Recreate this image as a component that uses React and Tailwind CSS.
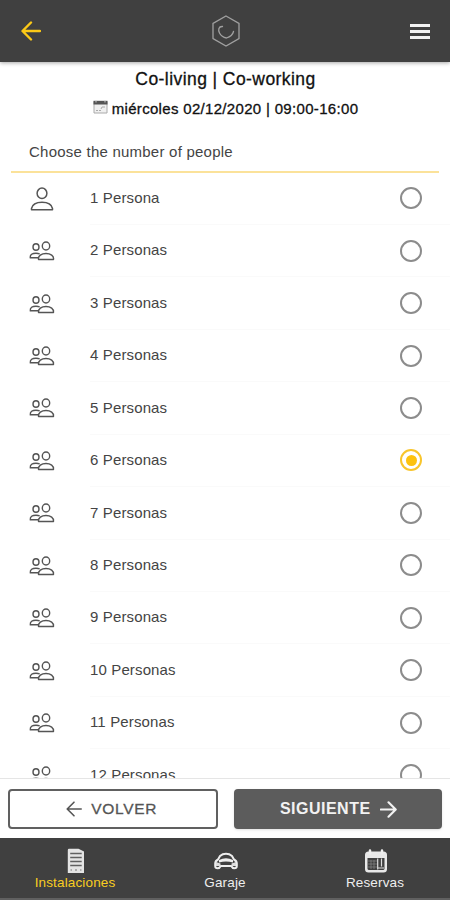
import { useState } from 'react';
import clsx from 'clsx';

const people = Array.from({ length: 12 }, (_, i) => i + 1);

const ArrowIcon = ({ className }) => (
  <svg className={className} viewBox="0 0 20 20" fill="none" stroke="currentColor" strokeLinecap="round" strokeLinejoin="round">
    <path d="M10 1.500 1.500 10l8.500 8.500M2 10h17" />
  </svg>
);

const LogoIcon = () => (
  <svg className="h-8 w-7" viewBox="0 0 28 32" fill="none" stroke="#a0a0a0" strokeWidth="1.300">
    <path d="M14 1 27 8.500v15L14 31 1 23.500v-15Z" />
    <path d="M10.500 11.500c-4-.3-4.500 3.500-3 6.500 1.500 3 4 4.500 7 5 3.500-1 6.300-3.500 7-6.500" strokeLinecap="round" />
  </svg>
);

const PersonIcon = () => (
  <svg className="h-6 w-6" viewBox="0 0 24 24" fill="none" stroke="#555" strokeWidth="1.500">
    <ellipse cx="12" cy="6.300" rx="4.900" ry="5.200" />
    <path d="M1.500 22.700v-1.200c.8-3.800 4.700-6.200 10.500-6.200s9.700 2.400 10.500 6.200v1.200Z" strokeLinejoin="round" />
  </svg>
);

const PeopleIcon = () => (
  <svg className="h-5 w-[26px]" viewBox="0 0 26 20" fill="none" stroke="#555" strokeWidth="1.400">
    <ellipse cx="17" cy="5" rx="3.700" ry="4" />
    <path d="M9.500 18.500c-.6-3.800 3-6 7.500-6s8.100 2.200 7.500 6Z" strokeLinejoin="round" />
    <ellipse cx="7" cy="6" rx="3" ry="3.200" />
    <path d="M9.500 16.800H1.300c-.4-3.200 2-4.600 5.700-4.600 1.500 0 2.700.2 3.700.8" strokeLinejoin="round" />
  </svg>
);

const SmallCalendarIcon = () => (
  <svg className="-mt-1 h-[14px] w-[15px]" viewBox="0 0 15 14" fill="none">
    <path d="M1 1.500h13v11.500H1Z" fill="#f0f0f0" stroke="#aaa" />
    <path d="M.5.800h14v3.700H.5Z" fill="#555" />
    <path d="M3 .5v2M12 .5v2" stroke="#ccc" />
    <path d="M3 10.500h2M6 10.500h2M9 7h3M8 9l1-2" stroke="#aaa" />
  </svg>
);

const BuildingIcon = () => (
  <svg className="ml-[2px] h-[26px] w-[18px]" viewBox="0 0 18 26" fill="none">
    <path d="M.8 2Q.8.800 2 .800h9.500L17 3.500V25H.8Z" fill="#e4e4e4" />
    <path d="M3.200 5.500h11.500M3.200 9.500h11.500M3.200 13.500h11.500M3.200 17.500h11.500" stroke="#606060" strokeWidth="1.500" />
    <path d="M3.500 22h1.500M8 22h2M13 22h1.500" stroke="#777" />
  </svg>
);

const CarIcon = () => (
  <svg className="ml-[2px] h-[18px] w-6" viewBox="0 0 24 18" fill="none">
    <path d="M4 7.500 6 4Q8.500 1.800 12 1.800T18 4l2 3.500q2.800 1.500 2.800 4v2.500q0 2.200-2.500 2.200-2 0-3-2.200H6.700q-1 2.200-3 2.200-2.500 0-2.500-2.200v-2.500q0-2.500 2.800-4Z" fill="#404040" stroke="#eee" strokeWidth="2" strokeLinejoin="round" />
    <path d="M5 8Q12 4.700 19 8v2.500Q12 8.300 5 10.500Z" fill="#eee" />
    <path d="m2 10 4.500 1.500v2.500H2ZM22 10l-4.500 1.500v2.500H22Z" fill="#ddd" />
  </svg>
);

const ReservasIcon = () => (
  <svg className="ml-[2px] h-6 w-6" viewBox="0 0 24 24" fill="none">
    <rect x="1" y="2.500" width="22" height="21" rx="3.500" fill="#e8e8e8" />
    <path d="M6 1.500v3M18 1.500v3" stroke="#eee" strokeWidth="2.500" strokeLinecap="round" />
    <path d="M3.500 9h17v10.500q0 1.500-1.500 1.500H5q-1.500 0-1.500-1.500Z" fill="#404040" />
    <path d="M4 12h9.500M4 15h9.500M4 18h9.500M7 11v9M10 11v9" stroke="#888" strokeWidth=".7" />
    <path d="M13.700 9.500v11M17.500 9.500v8M14 19h6" stroke="#ddd" strokeWidth="1.200" />
  </svg>
);

const Radio = ({ checked, onChange, label }) => (
  <button
    type="button"
    role="radio"
    aria-checked={checked}
    aria-label={label}
    onClick={onChange}
    className={clsx(
      'flex h-[22px] w-[22px] items-center justify-center rounded-full border-2',
      checked ? 'border-[#f8c52c]' : 'border-[#8c8c8c]'
    )}
  >
    {checked && <span className="h-[11px] w-[11px] rounded-full bg-[#fdc20f]" />}
  </button>
);

const tabs = [
  { name: 'Instalaciones', icon: <BuildingIcon />, active: true },
  { name: 'Garaje', icon: <CarIcon /> },
  { name: 'Reservas', icon: <ReservasIcon /> },
];

const App = () => {
  const [selected, setSelected] = useState(6);

  return (
    <div className="flex h-[900px] w-[450px] flex-col overflow-hidden bg-white font-['Liberation_Sans',Arial,sans-serif] text-[#444]">
      {/* Top bar */}
      <header className="flex h-[62px] shrink-0 items-center justify-between bg-[#404040] pr-5 pl-[21px] shadow-[0_1px_4px_rgba(0,0,0,0.35)]">
        <button type="button" aria-label="Back" className="text-[#fcc917]">
          <ArrowIcon className="h-5 w-5 stroke-[2.400]" />
        </button>
        <LogoIcon />
        <button type="button" aria-label="Menu" className="flex w-5 flex-col gap-[3px]">
          <span className="h-[3px] bg-[#f2f2f2]" />
          <span className="h-[3px] bg-[#f2f2f2]" />
          <span className="h-[3px] bg-[#f2f2f2]" />
        </button>
      </header>

      <section className="h-[60px] shrink-0 pt-[5px] pl-px text-center text-[#111]">
        <h1 className="text-[17.500px] leading-6 tracking-[0.430px] [-webkit-text-stroke:0.3px]">Co-living | Co-working</h1>
        <div className="mt-[8px] flex items-center justify-center gap-1">
          <SmallCalendarIcon />
          <p className="text-[15px] leading-5 tracking-[0.320px] [-webkit-text-stroke:0.3px]">miércoles 02/12/2020 | 09:00-16:00</p>
        </div>
      </section>

      <h2 className="mx-[11px] h-[50.500px] shrink-0 border-b-2 border-[#fbe29a] pt-5 pl-[18px] text-[15px] leading-5 tracking-[0.230px]">
        Choose the number of people
      </h2>

      {/* Options */}
      <ul role="radiogroup" className="min-h-0 flex-1 overflow-hidden">
        {people.map((n) => (
          <li key={n} className="flex h-[52.450px] items-center pl-[29px] text-[15px]">
            <span className="flex w-[26px] justify-center">
              {n === 1 ? <PersonIcon /> : <PeopleIcon />}
            </span>
            <div className="ml-[35px] flex h-full flex-1 items-center border-b border-[#fafafa] pr-7">
              <span className="flex-1 tracking-[0.130px]">
                {n} {n === 1 ? 'Persona' : 'Personas'}
              </span>
              <Radio checked={selected === n} onChange={() => setSelected(n)} label={`${n} Personas`} />
            </div>
          </li>
        ))}
      </ul>

      <div className="flex h-[60px] shrink-0 gap-4 border-t border-[#e5e5e5] px-2 pt-2.5">
        <button type="button" className="flex h-10 w-[210px] items-center justify-center gap-[9px] rounded border-2 border-[#606060] pr-0.5 text-[15.500px] tracking-[0.700px] text-[#555] [-webkit-text-stroke:0.3px]">
          <ArrowIcon className="h-4 w-4 stroke-2" />
          VOLVER
        </button>
        <button type="button" className="flex h-10 w-[209px] items-center justify-center gap-[9px] rounded bg-[#5c5c5c] pl-px text-[16px] font-bold tracking-[0.500px] text-[#f2f2f2] shadow">
          SIGUIENTE
          <ArrowIcon className="h-[17px] w-[17px] rotate-180 stroke-[2.500]" />
        </button>
      </div>

      {/* Bottom tabs */}
      <nav className="flex h-[62px] shrink-0 border-b-2 border-[#606060] bg-[#404040]">
        {tabs.map((tab) => (
          <a
            key={tab.name}
            href="#"
            className={clsx('flex flex-1 flex-col items-center pt-[9px] text-[13.500px] leading-[17px] tracking-[0.150px]', tab.active ? 'text-[#f8cd20]' : 'text-[#eee]')}
          >
            <span className="flex h-[27px] items-center">{tab.icon}</span>
            {tab.name}
          </a>
        ))}
      </nav>
    </div>
  );
};

export default App;
